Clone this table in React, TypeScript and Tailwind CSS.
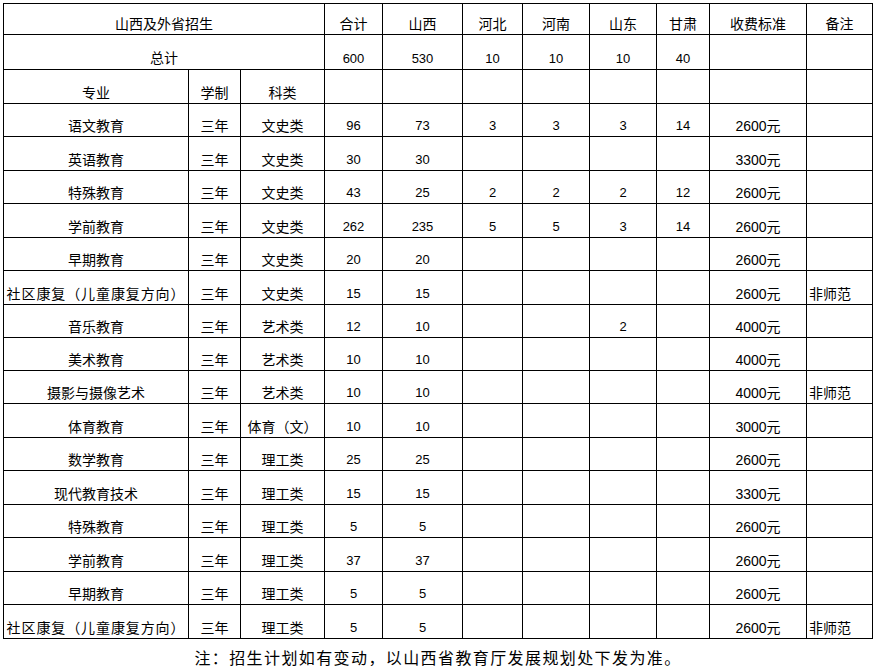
import React from "react";

const font = { fontFamily: '"Liberation Sans", "Noto Sans CJK SC", sans-serif' };

type Row = string[];

// major, years, category, total, 山西, 河北, 河南, 山东, 甘肃, fee, note
const rows: Row[] = [
  ["语文教育", "三年", "文史类", "96", "73", "3", "3", "3", "14", "2600元", ""],
  ["英语教育", "三年", "文史类", "30", "30", "", "", "", "", "3300元", ""],
  ["特殊教育", "三年", "文史类", "43", "25", "2", "2", "2", "12", "2600元", ""],
  ["学前教育", "三年", "文史类", "262", "235", "5", "5", "3", "14", "2600元", ""],
  ["早期教育", "三年", "文史类", "20", "20", "", "", "", "", "2600元", ""],
  ["社区康复（儿童康复方向）", "三年", "文史类", "15", "15", "", "", "", "", "2600元", "非师范"],
  ["音乐教育", "三年", "艺术类", "12", "10", "", "", "2", "", "4000元", ""],
  ["美术教育", "三年", "艺术类", "10", "10", "", "", "", "", "4000元", ""],
  ["摄影与摄像艺术", "三年", "艺术类", "10", "10", "", "", "", "", "4000元", "非师范"],
  ["体育教育", "三年", "体育（文）", "10", "10", "", "", "", "", "3000元", ""],
  ["数学教育", "三年", "理工类", "25", "25", "", "", "", "", "2600元", ""],
  ["现代教育技术", "三年", "理工类", "15", "15", "", "", "", "", "3300元", ""],
  ["特殊教育", "三年", "理工类", "5", "5", "", "", "", "", "2600元", ""],
  ["学前教育", "三年", "理工类", "37", "37", "", "", "", "", "2600元", ""],
  ["早期教育", "三年", "理工类", "5", "5", "", "", "", "", "2600元", ""],
  ["社区康复（儿童康复方向）", "三年", "理工类", "5", "5", "", "", "", "", "2600元", "非师范"],
];

function Cell({
  children,
  className = "",
  num = false,
}: {
  children?: React.ReactNode;
  className?: string;
  num?: boolean;
}) {
  return (
    <div
      className={`bg-white flex items-end justify-center whitespace-nowrap overflow-visible text-black ${
        num ? "text-[13px] leading-[14px] pb-[3px]" : "text-[14px] leading-[16px] pb-[2px]"
      } ${className}`}
    >
      {children}
    </div>
  );
}

export default function App() {
  return (
    <div className="bg-white w-[875px] h-[666px] overflow-hidden" style={font}>
      <div className="pt-[3px] pl-[3px]">
        <div className="inline-grid bg-black p-px gap-px grid-cols-[184px_51px_83px_57px_79px_59px_66px_66px_52px_96px_65px] grid-rows-[30px_34px_33px_32px_33px_32px_33px_32px_33px_32px_32px_32px_33px_32px_33px_32px_33px_32px_33px]">
          {/* header row 1 */}
          <Cell className="col-span-3">山西及外省招生</Cell>
          <Cell>合计</Cell>
          <Cell>山西</Cell>
          <Cell>河北</Cell>
          <Cell>河南</Cell>
          <Cell>山东</Cell>
          <Cell>甘肃</Cell>
          <Cell>收费标准</Cell>
          <Cell>备注</Cell>

          {/* header row 2 */}
          <Cell className="col-span-3 pb-[3px]">总计</Cell>
          <Cell num>600</Cell>
          <Cell num>530</Cell>
          <Cell num>10</Cell>
          <Cell num>10</Cell>
          <Cell num>10</Cell>
          <Cell num>40</Cell>
          <Cell />
          <Cell />

          {/* header row 3 */}
          <Cell>专业</Cell>
          <Cell>学制</Cell>
          <Cell>科类</Cell>
          <Cell />
          <Cell />
          <Cell />
          <Cell />
          <Cell />
          <Cell />
          <Cell />
          <Cell />

          {rows.map((r, i) => (
            <React.Fragment key={i}>
              <Cell className={r[0].length > 10 ? "tracking-[0.9px]" : ""}>{r[0]}</Cell>
              <Cell>{r[1]}</Cell>
              <Cell>{r[2]}</Cell>
              <Cell num>{r[3]}</Cell>
              <Cell num>{r[4]}</Cell>
              <Cell num>{r[5]}</Cell>
              <Cell num>{r[6]}</Cell>
              <Cell num>{r[7]}</Cell>
              <Cell num>{r[8]}</Cell>
              <Cell>{r[9]}</Cell>
              <Cell className="justify-start pl-[2px]">{r[10]}</Cell>
            </React.Fragment>
          ))}
        </div>
      </div>
      <div className="ml-[3px] w-[870px] text-center text-[16px] tracking-[1.4px] leading-[20px] mt-[10px] text-black">
        注：招生计划如有变动，以山西省教育厅发展规划处下发为准。
      </div>
    </div>
  );
}
